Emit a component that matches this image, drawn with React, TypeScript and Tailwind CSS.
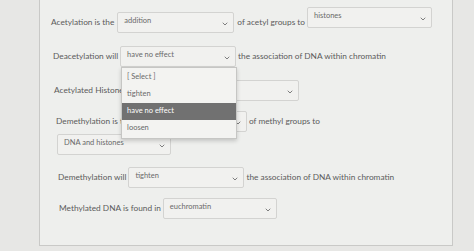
import React from 'react';
import { ChevronDown } from 'lucide-react';

interface SelectProps {
  value?: string;
  width: string;
  className?: string;
}

const FakeSelect: React.FC<SelectProps> = ({ value, width, className }) => (
  <div
    className={`${width} h-[21px] shrink-0 flex items-start justify-between pl-[6px] pr-[4px] pt-[3px] border border-[#d3d3d1] bg-[#f1f1ef] rounded-[2px] ${className ?? ''}`}
  >
    <span className="text-[7.5px] leading-[10px] text-[#6a6a6a]">{value}</span>
    <ChevronDown size={8} strokeWidth={2.5} className="text-[#666] mt-[4px]" />
  </div>
);

const options = ['[ Select ]', 'tighten', 'have no effect', 'loosen'];

export default function App() {
  return (
    <div className="w-[474px] h-[251px] overflow-hidden bg-[#e7e7e5]" style={{ fontFamily: 'Lato, "Noto Sans", sans-serif' }}>
      <div className="ml-[39px] w-[414px] h-[246px] border-l border-r border-b border-[#c9c9c7] bg-[#eeefed] pt-[11px] pl-[11px] text-[8.3px] text-[#5b5b5b] whitespace-nowrap">
        {/* row 1 */}
        <div className="flex items-center h-[22px] gap-[2px]">
          <span>Acetylation is the</span>
          <FakeSelect value="addition" width="w-[117px]" className="ml-[1px]" />
          <span className="ml-[1px]">of acetyl groups to</span>
          <FakeSelect value="histones" width="w-[125px]" className="mb-[10px]" />
        </div>

        {/* row 2 with open dropdown */}
        <div className="flex items-center h-[22px] gap-[2px] mt-[12px] pl-[2px]">
          <span>Deacetylation will</span>
          <div className="relative">
            <FakeSelect value="have no effect" width="w-[116px]" />
            <div className="absolute left-[1px] top-[21px] w-[116px] z-10 border border-[#c6c6c4] bg-[#f3f3f1] shadow-[0_2px_4px_rgba(0,0,0,0.18)] py-[1px]">
              {options.map((o) => (
                <div
                  key={o}
                  className={`h-[17px] flex items-center pl-[5px] text-[7.5px] ${
                    o === 'have no effect' ? 'bg-[#717171] text-white' : 'text-[#6a6a6a]'
                  }`}
                >
                  {o}
                </div>
              ))}
            </div>
          </div>
          <span>the association of DNA within chromatin</span>
        </div>

        {/* row 3 */}
        <div className="flex items-center h-[22px] gap-[2px] mt-[12px] pl-[3px]">
          <span>Acetylated Histones will</span>
          <FakeSelect value="" width="w-[155px]" />
        </div>

        {/* row 4 + wrap */}
        <div className="flex items-center h-[22px] gap-[2px] mt-[9px] pl-[5px]">
          <span>Demethylation is the</span>
          <FakeSelect value="" width="w-[113px]" />
          <span>of methyl groups to</span>
        </div>
        <div className="flex items-center h-[22px] mt-[1px] pl-[6px]">
          <FakeSelect value="DNA and histones" width="w-[114px]" />
        </div>

        {/* row 6 */}
        <div className="flex items-center h-[22px] gap-[2px] mt-[11px] pl-[7px]">
          <span>Demethylation will</span>
          <FakeSelect value="tighten" width="w-[116px]" />
          <span>the association of DNA within chromatin</span>
        </div>

        {/* row 7 */}
        <div className="flex items-center h-[22px] gap-[2px] mt-[9px] pl-[8px]">
          <span>Methylated DNA is found in</span>
          <FakeSelect value="euchromatin" width="w-[114px]" />
        </div>
      </div>
    </div>
  );
}
